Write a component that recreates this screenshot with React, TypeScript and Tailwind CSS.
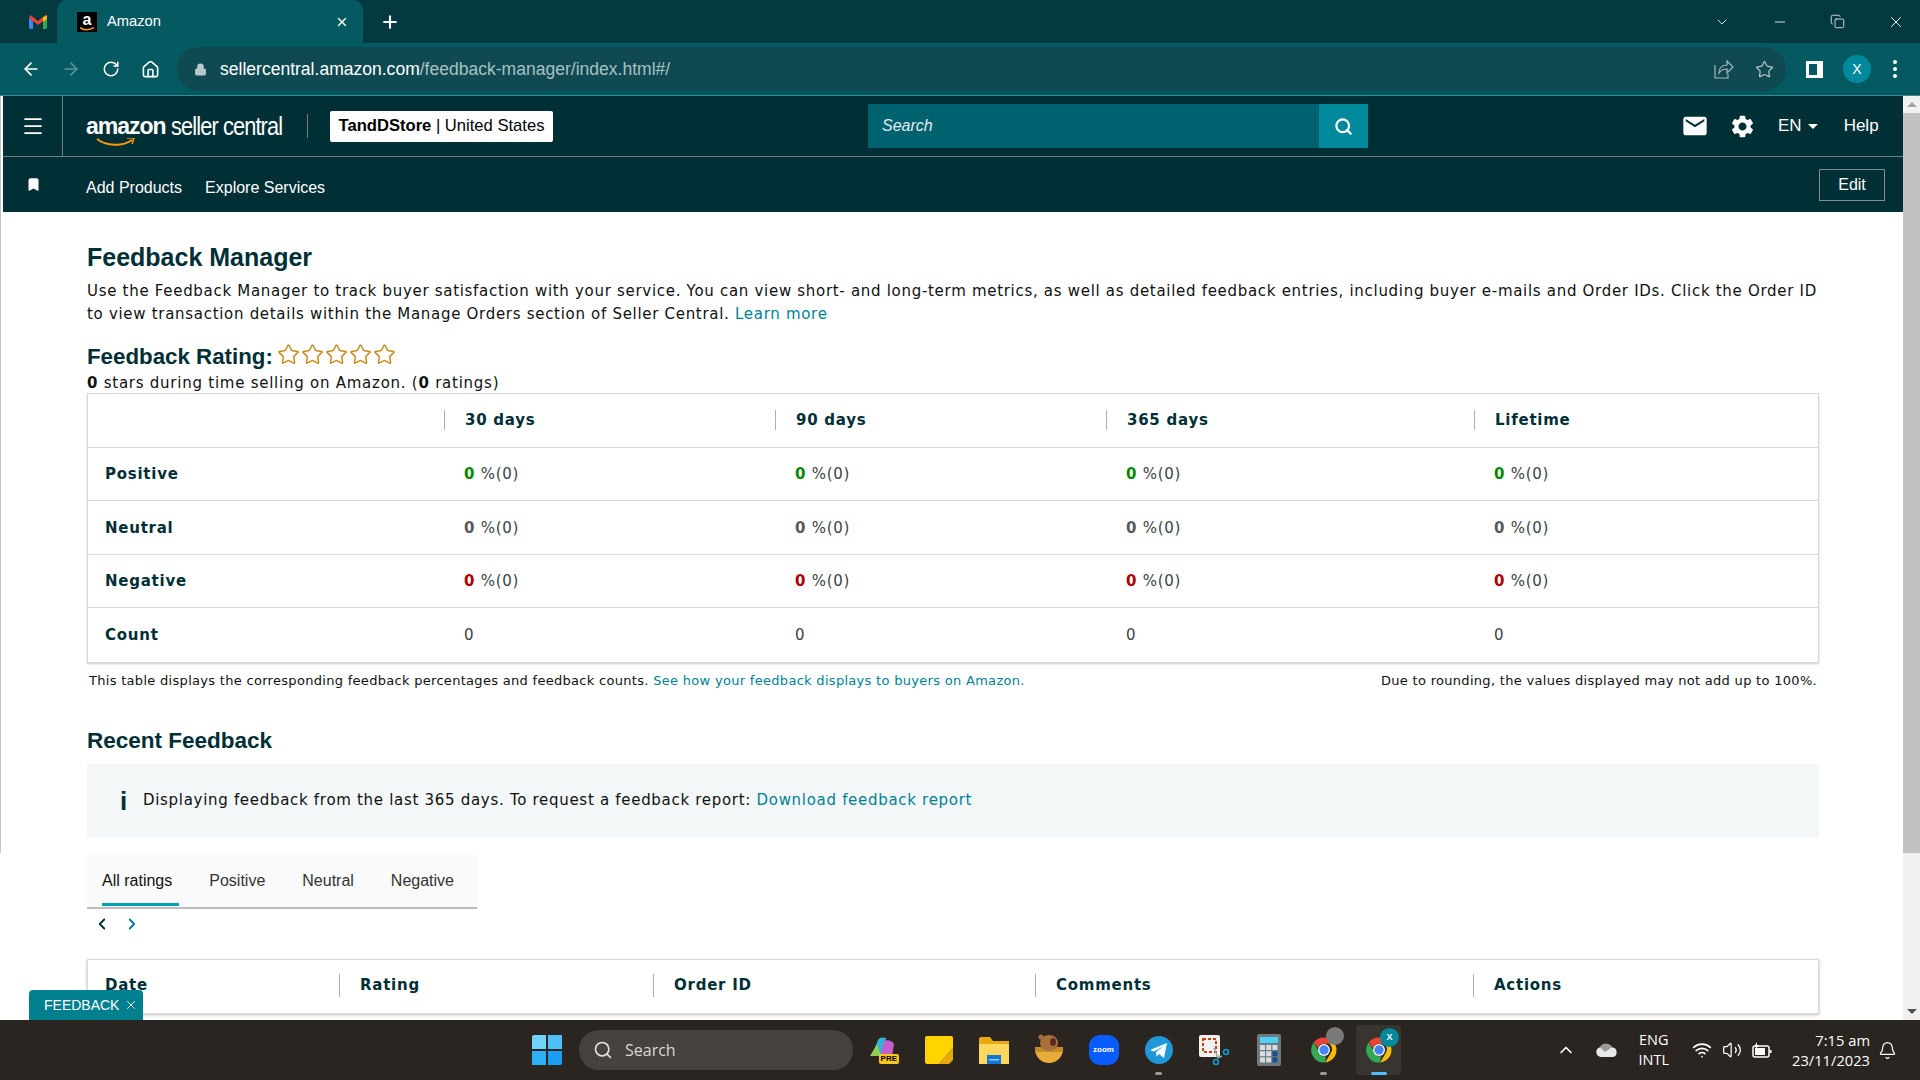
import React from 'react'
import {
  ArrowLeft,
  ArrowRight,
  RotateCw,
  Home,
  Lock,
  Star,
  X,
  Plus,
  ChevronDown,
  ChevronUp,
  ChevronLeft,
  ChevronRight,
  Search,
  Menu,
  Bookmark,
  Wifi,
  Volume2,
  Bell,
  Minus,
  Copy,
} from 'lucide-react'
import { MdEmail, MdSettings } from 'react-icons/md'

const body = "font-['DejaVu_Sans',sans-serif] tracking-[0.7px]"
const arial = "font-['Liberation_Sans',sans-serif]"

const columns = ['30 days', '90 days', '365 days', 'Lifetime']

const rows = [
  { label: 'Positive', color: 'text-[#008a00]' },
  { label: 'Neutral', color: 'text-[#565959]' },
  { label: 'Negative', color: 'text-[#b00000]' },
]

const Row: React.FC<{ children: React.ReactNode; last?: boolean }> = ({ children, last }) => (
  <div
    className={`grid grid-cols-[356px_331px_331px_368px_1fr] items-center h-[53.5px] ${
      last ? '' : 'border-b border-[#d5d9d9]'
    }`}
  >
    {children}
  </div>
)

const ChromeLogo: React.FC<{ size?: number }> = ({ size = 28 }) => (
  <svg width={size} height={size} viewBox="0 0 48 48">
    <path d="M24 4a20 20 0 0 1 17.3 10H24a10 10 0 0 0-9.5 6.9L7.6 12A20 20 0 0 1 24 4z" fill="#ea4335" />
    <path d="M41.3 14A20 20 0 0 1 26 43.9L34.6 29A10 10 0 0 0 32 14z" fill="#fbbc04" />
    <path d="M26 43.9A20 20 0 0 1 7.6 12l8.6 15a10 10 0 0 0 10.9 7z" fill="#34a853" />
    <circle cx="24" cy="24" r="9.5" fill="#fff" />
    <circle cx="24" cy="24" r="7.5" fill="#4285f4" />
  </svg>
)

const TaskIcon: React.FC<{ children: React.ReactNode; dot?: boolean; active?: boolean }> = ({ children, dot, active }) => (
  <div
    className={`relative w-[45px] h-[50px] mr-[10px] flex items-center justify-center rounded ${
      active ? 'bg-[#38342f]' : ''
    }`}
  >
    {children}
    {dot && <span className="absolute bottom-0 w-[7px] h-[3px] rounded-full bg-[#9a9a9a]" />}
    {active && <span className="absolute bottom-0 w-[16px] h-[3px] rounded-full bg-[#4cc2ff]" />}
  </div>
)

export default function App() {
  return (
    <div className={`w-[1920px] h-[1080px] flex flex-col overflow-hidden relative bg-white ${arial}`}>
      {/* browser tabs */}
      <div className="h-[43px] bg-[#033a40] flex items-end shrink-0">
        <div className="w-[57px] h-[43px] flex items-center justify-center pl-[18px]">
          <svg width="18" height="14" viewBox="0 0 18 14">
            <path d="M0 3v9a2 2 0 0 0 2 2h2V6z" fill="#4285f4" />
            <path d="M18 3v9a2 2 0 0 1-2 2h-2V6z" fill="#34a853" />
            <path d="M0 3 9 10l9-7-1.5-3L9 6 1.5 0z" fill="#ea4335" />
            <path d="M14 2.5 18 0v4l-4 3z" fill="#fbbc04" />
          </svg>
        </div>
        <div className="w-[306px] h-[43px] bg-[#045a60] rounded-t-[10px] flex items-center pl-[20px] pr-[14px]">
          <div className="relative w-[20px] h-[20px] bg-black flex justify-center text-white text-[16px] font-bold leading-[15px]">
            a
            <svg className="absolute left-[3px] bottom-[1px]" width="14" height="4" viewBox="0 0 14 4">
              <path d="M0 0.500c4 3 9 3 14 0" fill="none" stroke="#f90" strokeWidth="1.500" />
            </svg>
          </div>
          <span className="text-white text-[14.7px] ml-[10px] flex-1">Amazon</span>
          <X size={14} strokeWidth={2.5} className="text-white" />
        </div>
        <div className="h-[43px] flex items-center ml-[17px] flex-1">
          <Plus size={20} strokeWidth={2.5} className="text-white" />
          <div className="flex-1" />
          <ChevronDown size={16} strokeWidth={1.25} className="text-white mr-[42px]" />
          <Minus size={16} strokeWidth={1.25} className="text-white mr-[42px]" />
          <Copy size={15} strokeWidth={1.25} className="text-white mr-[42px]" />
          <X size={18} strokeWidth={1.25} className="text-white mr-[15px]" />
        </div>
      </div>

      {/* toolbar */}
      <div className="h-[53px] bg-[#045a60] border-b border-[#3b8a90] flex items-center shrink-0">
        <ArrowLeft size={20} className="text-white ml-[21px]" />
        <ArrowRight size={20} className="text-[#5f9397] ml-[20px]" />
        <RotateCw size={18} className="text-white ml-[21px]" />
        <Home size={19} className="text-white ml-[21px]" />
        <div className="ml-[17px] w-[1609px] h-[44px] rounded-full bg-[#0f4a52] flex items-center pl-[17px] pr-[12px]">
          <Lock size={13} className="text-[#b9c8ca]" fill="#b9c8ca" />
          <span className="ml-[13px] pt-[1px] text-[17.55px] text-white">
            sellercentral.amazon.com<span className="text-[#a9c0c3]">/feedback-manager/index.html#/</span>
          </span>
          <div className="flex-1" />
          <svg width="20" height="20" viewBox="0 0 20 20" fill="none" stroke="#a9b8ba" strokeWidth="1.2">
            <path d="M1 6v13h13v-4" />
            <path d="M5 14c0-5 3-8 8-8V2l6 6-6 6v-4c-4 0-6 1-8 4z" />
          </svg>
          <Star size={19} strokeWidth={1.5} className="text-[#b9c8ca] ml-[21px]" />
        </div>
        <div className="ml-[20px] w-[17px] h-[17px] border-[3px] border-r-[6px] border-white" />
        <div className="ml-[20px] w-[28px] h-[28px] rounded-full bg-[#00899b] text-white text-[14px] flex items-center justify-center">
          X
        </div>
        <div className="ml-[22px] flex flex-col gap-[3px]">
          <span className="w-[4px] h-[4px] rounded-full bg-white" />
          <span className="w-[4px] h-[4px] rounded-full bg-white" />
          <span className="w-[4px] h-[4px] rounded-full bg-white" />
        </div>
      </div>

      {/* page + scrollbar */}
      <div className="flex-1 min-h-0 flex">
        <div className="w-[3px] bg-white shrink-0 flex flex-col">
          <div className="h-[757px] w-[1px] bg-[#c4c4c4]" />
        </div>
        <div className="flex-1 min-w-0 overflow-hidden">
          {/* seller central header */}
          <div className="h-[61px] bg-[#012f36] border-b border-[#6f8082] flex items-center">
            <div className="w-[60px] h-full border-r border-[#6f8082] flex items-center justify-center">
              <Menu size={24} strokeWidth={1.75} className="text-white" />
            </div>
            <div className="ml-[23px] w-[198px] relative h-[40px] flex items-center text-white leading-none whitespace-nowrap">
              <span className="text-[23px] font-bold tracking-[-1px]">amazon</span>
              <span className="text-[25px] ml-[5px] tracking-[-1px] scale-x-[0.87] origin-left">seller central</span>
              <svg className="absolute left-[10px] bottom-[-2px]" width="40" height="10" viewBox="0 0 40 10">
                <path d="M1 1c9 7 25 8 35 1" fill="none" stroke="#f90" strokeWidth="2" />
                <path d="M31 0h7l-2 6" fill="none" stroke="#f90" strokeWidth="1.5" />
              </svg>
            </div>
            <div className="w-[1px] h-[24px] bg-[#6f8082] ml-[23px]" />
            <div className="ml-[22px] w-[223px] h-[31px] bg-white rounded-[2px] flex items-center justify-center text-[16.6px] text-black whitespace-nowrap">
              <span className="font-bold">TandDStore</span>&nbsp;|&nbsp;United States
            </div>
            <div className="ml-[315px] w-[500px] h-[44px] flex">
              <div className="flex-1 bg-[#00616f] flex items-center pl-[14px] text-[16px] italic text-[#e3eced]">Search</div>
              <div className="w-[49px] bg-[#00899b] flex items-center justify-center">
                <Search size={19} strokeWidth={2.75} className="text-white" />
              </div>
            </div>
            <MdEmail size={28} className="text-white ml-[313px]" />
            <MdSettings size={27} className="text-white ml-[20px]" />
            <span className="text-white text-[17px] ml-[22px]">EN</span>
            <span className="ml-[6px] w-0 h-0 border-x-[5px] border-x-transparent border-t-[5px] border-t-white" />
            <span className="text-white text-[17px] ml-[26px]">Help</span>
          </div>
          <div className="h-[55px] bg-[#012f36] flex items-center">
            <Bookmark size={15} className="text-white ml-[23px] mt-[-1px]" fill="white" />
            <span className="ml-[45px] mt-[6px] text-white text-[16px]">Add Products</span>
            <span className="ml-[23px] mt-[6px] text-white text-[16px]">Explore Services</span>
            <div className="flex-1" />
            <div className="mr-[18px] w-[66px] h-[32px] border border-[#7d8f91] text-white text-[16px] flex items-center justify-center">
              Edit
            </div>
          </div>

          {/* content */}
          <div className={`w-[1732px] ml-[84px] text-[#0f1111] ${body}`}>
            <h1 className={`${arial} tracking-normal text-[25px] font-bold text-[#002f36] leading-[30px] mt-[30px]`}>Feedback Manager</h1>
            <p className="text-[15px] leading-[23px] mt-[8px] text-[#0f1111]">
              Use the Feedback Manager to track buyer satisfaction with your service. You can view short- and long-term
              metrics, as well as detailed feedback entries, including buyer e-mails and Order IDs. Click the Order ID to
              view transaction details within the Manage Orders section of Seller Central.{' '}
              <span className="text-[#008296]">Learn more</span>
            </p>
            <div className="flex items-center h-[30px] mt-[16px]">
              <span className={`${arial} tracking-normal text-[22.3px] font-bold text-[#002f36]`}>Feedback Rating:</span>
              <div className="flex ml-[4px] mb-[5px] gap-[1px]">
                {[0, 1, 2, 3, 4].map((i) => (
                  <Star key={i} size={23} strokeWidth={1.5} className="text-[#c98a1b]" />
                ))}
              </div>
            </div>
            <p className="text-[15px] leading-[20px] mt-[1px] tracking-[0.75px]">
              <b>0</b> stars during time selling on Amazon. (<b>0</b> ratings)
            </p>

            {/* summary table */}
            <div className="border border-[#d5d9d9] shadow-[0_1px_2px_rgba(0,0,0,0.2)] text-[15px] tracking-[0.75px]">
              <Row>
                <div />
                {columns.map((c) => (
                  <div key={c} className="border-l border-[#aab0b0] h-[20px] pl-[20px] leading-[20px] font-bold text-[#002f36]">
                    {c}
                  </div>
                ))}
              </Row>
              {rows.map((r) => (
                <Row key={r.label}>
                  <div className="pl-[17px] pt-[1px] font-bold text-[#002f36]">{r.label}</div>
                  {columns.map((c) => (
                    <div key={c} className="pl-[20px] pt-[1px] text-[#3a4444]">
                      <b className={r.color}>0</b> %(0)
                    </div>
                  ))}
                </Row>
              ))}
              <Row last>
                <div className="pl-[17px] pt-[1px] font-bold text-[#002f36]">Count</div>
                {columns.map((c) => (
                  <div key={c} className="pl-[20px] pt-[1px] text-[#3a4444]">
                    0
                  </div>
                ))}
              </Row>
            </div>
            <div className="flex justify-between text-[13px] tracking-[0.3px] mt-[8px] px-[2px] leading-[20px]">
              <span>
                This table displays the corresponding feedback percentages and feedback counts.{' '}
                <span className="text-[#008296]">See how your feedback displays to buyers on Amazon.</span>
              </span>
              <span>Due to rounding, the values displayed may not add up to 100%.</span>
            </div>

            <h2 className={`${arial} tracking-normal text-[22.5px] font-bold text-[#002f36] leading-[30px] mt-[35px]`}>Recent Feedback</h2>
            <div className="mt-[8px] h-[74px] bg-[#f3f7f8] flex items-center pl-[33px] text-[15px]">
              <span className={`${arial} font-bold text-[26px] text-[#002f36] leading-none mr-[15px]`}>i</span>
              <span>
                Displaying feedback from the last 365 days. To request a feedback report:{' '}
                <span className="text-[#008296]">Download feedback report</span>
              </span>
            </div>

            <div className={`mt-[17px] w-[390px] h-[54px] bg-[#fafafa] border-b-2 border-[#b8bcbc] flex items-center pl-[15px] gap-[37px] text-[16px] tracking-normal text-[#0f1111] ${arial} relative`}>
              <span className="relative">
                All ratings
                <span className="absolute left-0 right-[-7px] top-[34px] h-[3px] bg-[#00a2b8]" />
              </span>
              <span className="text-[#333]">Positive</span>
              <span className="text-[#333]">Neutral</span>
              <span className="text-[#333]">Negative</span>
            </div>
            <div className="h-[30px] flex items-center pl-[6px] gap-[12px]">
              <ChevronLeft size={18} strokeWidth={2.5} className="text-[#002f36]" />
              <ChevronRight size={18} strokeWidth={2.5} className="text-[#008296]" />
            </div>

            <div className="mt-[20px] h-[55px] border border-[#d5d9d9] shadow-[0_1px_3px_rgba(0,0,0,0.25)] grid grid-cols-[251px_314px_382px_438px_1fr] items-center text-[15px] tracking-[0.75px] font-bold text-[#002f36] pb-[1px]">
              <div className="pl-[17px]">Date</div>
              <div className="border-l border-[#aab0b0] pl-[20px]">Rating</div>
              <div className="border-l border-[#aab0b0] pl-[20px]">Order ID</div>
              <div className="border-l border-[#aab0b0] pl-[20px]">Comments</div>
              <div className="border-l border-[#aab0b0] pl-[20px]">Actions</div>
            </div>
          </div>
        </div>

        {/* scrollbar */}
        <div className="w-[17px] bg-[#f1f1f1] flex flex-col items-center shrink-0">
          <div className="h-[17px] flex items-center justify-center">
            <span className="w-0 h-0 border-x-[5px] border-x-transparent border-b-[5px] border-b-[#a3a3a3]" />
          </div>
          <div className="w-full h-[740px] bg-[#c1c1c1]" />
          <div className="flex-1" />
          <div className="h-[17px] flex items-center justify-center">
            <span className="w-0 h-0 border-x-[5px] border-x-transparent border-t-[5px] border-t-[#505050]" />
          </div>
        </div>
      </div>

      {/* taskbar */}
      <div className="h-[60px] bg-[#2a2520] shrink-0 flex items-center text-white relative z-10">
        <div className="ml-[532px] w-[30px] h-[30px] grid grid-cols-2 grid-rows-2 gap-[2px]">
          <span className="bg-[#6fd3fb] rounded-tl-[2px]" />
          <span className="bg-[#4cc0f7]" />
          <span className="bg-[#2cb0f7]" />
          <span className="bg-[#1a9ef5] rounded-br-[2px]" />
        </div>
        <div className="ml-[17px] w-[274px] h-[40px] rounded-full bg-[#46423d] flex items-center pl-[14px] text-[#d8d8d6] text-[16px] font-['Open_Sans',sans-serif]">
          <Search size={20} className="text-[#e2e2e2]" />
          <span className="ml-[12px]">Search</span>
        </div>
        <div className="ml-[8px] flex items-center">
          <TaskIcon>
            <div className="relative w-[28px] h-[28px] mr-[3px]">
              <svg width="28" height="24" viewBox="0 0 28 24">
                <path d="M4 20 10 4c1-3 6-3 8-2l-4 18z" fill="#2fb7d8" />
                <path d="M12 20 16 5c3-2 9 0 10 3l-2 12z" fill="#c45fd0" />
                <path d="M2 20 9 8l4 12z" fill="#8fcf52" />
              </svg>
              <span className="absolute right-[-3px] bottom-0 bg-[#ffc619] text-black text-[8px] font-bold leading-[10px] px-[2px] rounded-[2px]">PRE</span>
            </div>
          </TaskIcon>
          <TaskIcon>
            <svg width="28" height="28" viewBox="0 0 28 28">
              <rect width="28" height="28" rx="2" fill="#ffd400" />
              <path d="M28 12v16H14z" fill="#2f2a20" />
              <path d="M28 12 14 28h10l4-4z" fill="#e8a90c" />
            </svg>
          </TaskIcon>
          <TaskIcon>
            <svg width="30" height="28" viewBox="0 0 30 28">
              <path d="M0 3a2 2 0 0 1 2-2h9l3 4h16v23H0z" fill="#e8a912" />
              <path d="M0 8h30v20H0z" fill="#ffd75e" />
              <path d="M8 19h14v9H8z" fill="#0f78d4" />
              <path d="M10 23h10v1.5H10z" fill="#8fd0ff" />
            </svg>
          </TaskIcon>
          <TaskIcon>
            <svg width="30" height="32" viewBox="0 0 30 32">
              <path d="M1 15a14 14 0 0 0 28 0z" fill="#e6ac3a" />
              <path d="M1 13h28v5H1z" fill="#c58b28" />
              <ellipse cx="15" cy="9" rx="9" ry="8" fill="#a9713a" />
              <ellipse cx="19" cy="8" rx="3" ry="4" fill="#5a2a20" />
              <circle cx="7" cy="3" r="2.5" fill="#a9713a" />
            </svg>
          </TaskIcon>
          <TaskIcon>
            <div className="w-[30px] h-[30px] rounded-[11px] bg-[#0b5cff] text-white text-[8px] font-bold flex items-center justify-center">
              zoom
            </div>
          </TaskIcon>
          <TaskIcon dot>
            <svg width="28" height="28" viewBox="0 0 28 28">
              <circle cx="14" cy="14" r="14" fill="#1f97d8" />
              <path d="M5 14 22 7l-3 15-5-4-2.5 2.5L11 16l8-6-10 5.500z" fill="#fff" />
            </svg>
          </TaskIcon>
          <TaskIcon>
            <svg width="32" height="32" viewBox="0 0 32 32">
              <rect x="1" y="1" width="21" height="22" rx="2" fill="#f2f2f2" />
              <rect x="5" y="5" width="13" height="13" fill="none" stroke="#d83b01" strokeWidth="2" strokeDasharray="3 2" />
              <path d="M16 14l4 10 4-2" fill="none" stroke="#9aa0a6" strokeWidth="1.500" />
              <circle cx="28" cy="18" r="2.500" fill="none" stroke="#0f9bd7" strokeWidth="1.500" />
              <circle cx="18" cy="28" r="2.500" fill="none" stroke="#0f9bd7" strokeWidth="1.500" />
            </svg>
          </TaskIcon>
          <TaskIcon>
            <svg width="24" height="32" viewBox="0 0 24 32">
              <rect width="24" height="32" rx="2" fill="#6f7a80" />
              <rect x="3" y="3" width="18" height="6" fill="#4fd0f5" />
              {[0, 1, 2].map((r) =>
                [0, 1, 2].map((c) => (
                  <rect key={`${r}-${c}`} x={3 + c * 6.2} y={11 + r * 6.2} width="5" height="5" fill={c === 2 && r > 0 ? '#1a4f8f' : '#d5dde0'} />
                )),
              )}
            </svg>
          </TaskIcon>
          <TaskIcon dot>
            <ChromeLogo size={30} />
            <span className="absolute right-[2px] top-[2px] w-[18px] h-[18px] rounded-full bg-[#7a7a78]" />
          </TaskIcon>
          <TaskIcon active>
            <ChromeLogo size={30} />
            <span className="absolute right-[2px] top-[3px] w-[19px] h-[19px] rounded-full bg-[#00899b] text-white text-[9px] font-bold flex items-center justify-center">
              X
            </span>
          </TaskIcon>
        </div>
        <div className="flex-1" />
        <ChevronUp size={20} strokeWidth={2} className="text-white mr-[20px]" />
        <svg width="22" height="14" viewBox="0 0 22 14" className="mr-[21px]">
          <path d="M5 14a5 5 0 0 1-1-9.800 7 7 0 0 1 12 0A5 5 0 0 1 17 14z" fill="#e8e8e8" />
          <path d="M4 4.200a7 7 0 0 1 12 0L9 9z" fill="#9a9a9a" />
        </svg>
        <div className="text-[14.5px] leading-[20px] text-center mr-[23px] font-['Open_Sans',sans-serif]">
          ENG
          <br />
          INTL
        </div>
        <Wifi size={20} className="mr-[10px]" />
        <Volume2 size={20} strokeWidth={1.5} className="mr-[10px]" />
        <svg width="20" height="16" viewBox="0 0 20 16" className="mr-[20px]">
          <rect x="1" y="4" width="16" height="11" rx="2" fill="none" stroke="#fff" strokeWidth="1.500" />
          <rect x="3" y="6" width="10" height="7" fill="#fff" />
          <rect x="17.500" y="8" width="2" height="3" fill="#fff" />
          <path d="M5 0 2 5h2l-1 3 4-5H5z" fill="#fff" />
        </svg>
        <div className="text-[14.7px] leading-[20px] text-right mr-[8px] font-['Open_Sans',sans-serif]">
          7:15 am
          <br />
          23/11/2023
        </div>
        <Bell size={19} strokeWidth={1.5} className="mr-[23px]" />
      </div>

      {/* feedback tab */}
      <div className="absolute left-[29px] top-[990px] w-[114px] h-[30px] bg-[#00808f] rounded-t-[4px] flex items-center pl-[15px] text-white text-[14px]">
        FEEDBACK
        <X size={14} strokeWidth={1.5} className="ml-[5px]" />
      </div>
    </div>
  )
}
